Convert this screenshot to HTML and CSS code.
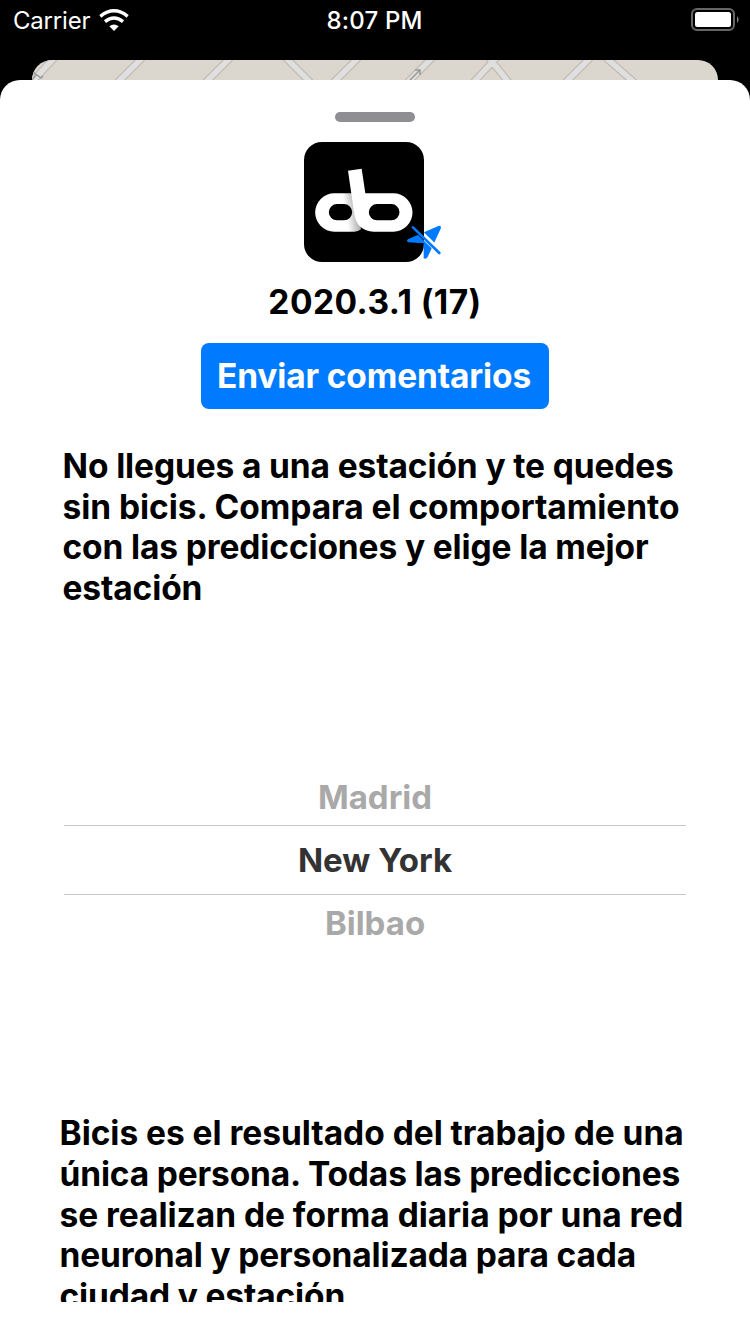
FILE: index.html
```html
<!DOCTYPE html>
<html lang="es">
<head>
<meta charset="utf-8">
<title>Bicis</title>
<link rel="stylesheet" href="styles.css">
</head>
<body>
<header class="status">
  <div class="carrier"><span>Carrier</span>
    <svg class="wifi" width="30" height="24" viewBox="0 0 90 72"><g fill="none" stroke="#fff" stroke-width="10"><path d="M4 22Q45 -11 86 22"/><path d="M18 38Q45 16 72 38"/></g><path d="M31 52Q45 41 59 52L45 66Z" fill="#fff"/></svg>
  </div>
  <time class="time">8:07 PM</time>
  <svg class="battery" width="48" height="24" viewBox="0 0 48 24"><rect x="1" y="1" width="42" height="21" rx="5" fill="none" stroke="#666" stroke-width="2"/><rect x="4" y="4" width="36" height="15" rx="2.5" fill="#fff"/><path d="M46 8Q49 11.500 46 15Z" fill="#888"/></svg>
</header>
<div class="map">
  <svg width="686" height="20" viewBox="0 0 686 20">
    <rect width="686" height="20" fill="#dbd7cf"/>
    <path d="M0 0H12L0 10Z" fill="#a9c48c"/>
    <g fill="none" stroke="#c4bab2" stroke-width="8"><path d="M-2 24L24 -4M84 24L112 -4M172 24L200 -4M300 24L328 -4M374 24L402 -4M440 24L466 -4M252 -4L280 24M454 -6L478 24M532 24L560 -4M572 -4L604 24"/></g>
    <g fill="none" stroke="#dedfde" stroke-width="5.500"><path d="M-2 24L24 -4M84 24L112 -4M172 24L200 -4M300 24L328 -4M374 24L402 -4M440 24L466 -4M252 -4L280 24M454 -6L478 24M532 24L560 -4M572 -4L604 24"/></g>
    <path d="M378 20L388 10M383 10H388V15M1 12L9 18L11 16M0 20L4 15" fill="none" stroke="#999" stroke-width="1.500"/>
  </svg>
</div>
<main class="sheet">
  <div class="grabber"></div>
  <svg class="logo" width="120" height="120" viewBox="27 21 360 360">
    <defs>
      <linearGradient id="shade" gradientUnits="userSpaceOnUse" x1="152" y1="236" x2="190" y2="230"><stop offset="0" stop-color="#fff"/><stop offset="1" stop-color="#aaa"/></linearGradient>
      <mask id="gap" maskUnits="userSpaceOnUse" x="320" y="260" width="130" height="125"><path d="M320 260H450V385H320Z" fill="#fff"/><path d="M347 266L443 359" stroke="#000" stroke-width="18"/></mask>
    </defs>
    <rect x="27" y="21" width="360" height="360" rx="54"/>
    <path fill-rule="evenodd" fill="url(#shade)" d="M118 175H180L198 283Q190 290 178 290H118A57.500 57.500 0 0 1 118 175ZM126 207A24.500 24.500 0 0 0 126 256H147A24.500 24.500 0 0 0 147 207Z"/>
    <path fill-rule="evenodd" fill="#fff" d="M159 107L200 101L211 175H295A57.500 57.500 0 0 1 295 290H236Q186 288 178 238ZM246 207A24.500 24.500 0 0 0 246 256H289A24.500 24.500 0 0 0 289 207Z"/>
    <path mask="url(#gap)" d="M430 273Q440 270 437 281L398 366Q393 374 386 370V325L340 322Q332 317 340 312Z" fill="#007aff"/>
    <path d="M354 277L433 354" stroke="#007aff" stroke-width="8" stroke-linecap="round"/>
  </svg>
  <h1 class="version">2020.3.1 (17)</h1>
  <button class="send" type="button">Enviar comentarios</button>
  <p class="intro"><span>No llegues a una estación y te quedes</span><span class="open">sin bicis. Compara el comportamiento</span><span>con las predicciones y elige la mejor</span><span>estación</span></p>
  <div class="picker"><div class="city">Madrid</div><div class="city selected">New York</div><div class="city">Bilbao</div></div>
  <p class="about"><span class="open">Bicis es el resultado del trabajo de una</span><span>única persona. Todas las predicciones</span><span class="open">se realizan de forma diaria por una red</span><span>neuronal y personalizada para cada</span><span>ciudad y estación.</span></p>
</main>
</body>
</html>
```
FILE: styles.css
```css
* { box-sizing: border-box; }
body { margin: 0; width: 750px; height: 1334px; overflow: hidden; background: #000; font-family: Inter, sans-serif; font-weight: 660; color: #000; display: flex; flex-direction: column; }
.status { height: 60px; flex: none; padding: 0 11px 0 13px; display: grid; grid-template-columns: 1fr auto 1fr; align-items: start; color: #fff; font-size: 24px; line-height: 42px; }
.carrier { display: flex; align-items: flex-start; gap: 9px; font-weight: 400; letter-spacing: -.2px; }
.wifi { margin-top: 9px; }
.time { font-weight: 500; letter-spacing: .2px; margin-right: 3px; }
.battery { justify-self: end; margin-top: 8px; }
.map { height: 20px; flex: none; margin: 0 32px; border-radius: 20px 20px 0 0; overflow: hidden; }
.map svg { display: block; }
.sheet { height: 1254px; flex: none; background: #fff; border-radius: 20px 20px 0 0; padding-top: 32px; display: flex; flex-direction: column; align-items: center; }
.grabber { width: 80px; height: 10px; border-radius: 5px; background: #8e8e93; }
.logo { display: block; margin: 20px 22px 0 0; overflow: visible; }
.version { margin: 20px 0 0; font-size: 33.500px; line-height: 41px; font-weight: 660; letter-spacing: .45px; }
.send { margin-top: 20px; width: 348px; height: 66px; border: 0; border-radius: 8px; padding: 0 2px 0 0; background: #007aff; color: #fff; font: 660 33.500px/66px Inter, sans-serif; letter-spacing: -.14px; white-space: nowrap; }
.intro, .about { margin: 37px 0 0; width: 625px; font-size: 33.500px; line-height: 40.600px; letter-spacing: -.12px; white-space: nowrap; }
.intro span, .about span { display: block; width: max-content; }
.intro .open { letter-spacing: -.04px; }
.picker { margin-top: 161px; width: 622px; text-align: center; font-size: 33px; }
.city { height: 56px; line-height: 56px; color: #a9a9a9; }
.selected { height: 70px; line-height: 69px; color: #333; border: solid #c8c8c8; border-width: 1px 0; }
.about { margin-top: 162px; height: 189px; width: 631px; overflow: hidden; letter-spacing: -.15px; }
.about .open { letter-spacing: -.03px; }
```
